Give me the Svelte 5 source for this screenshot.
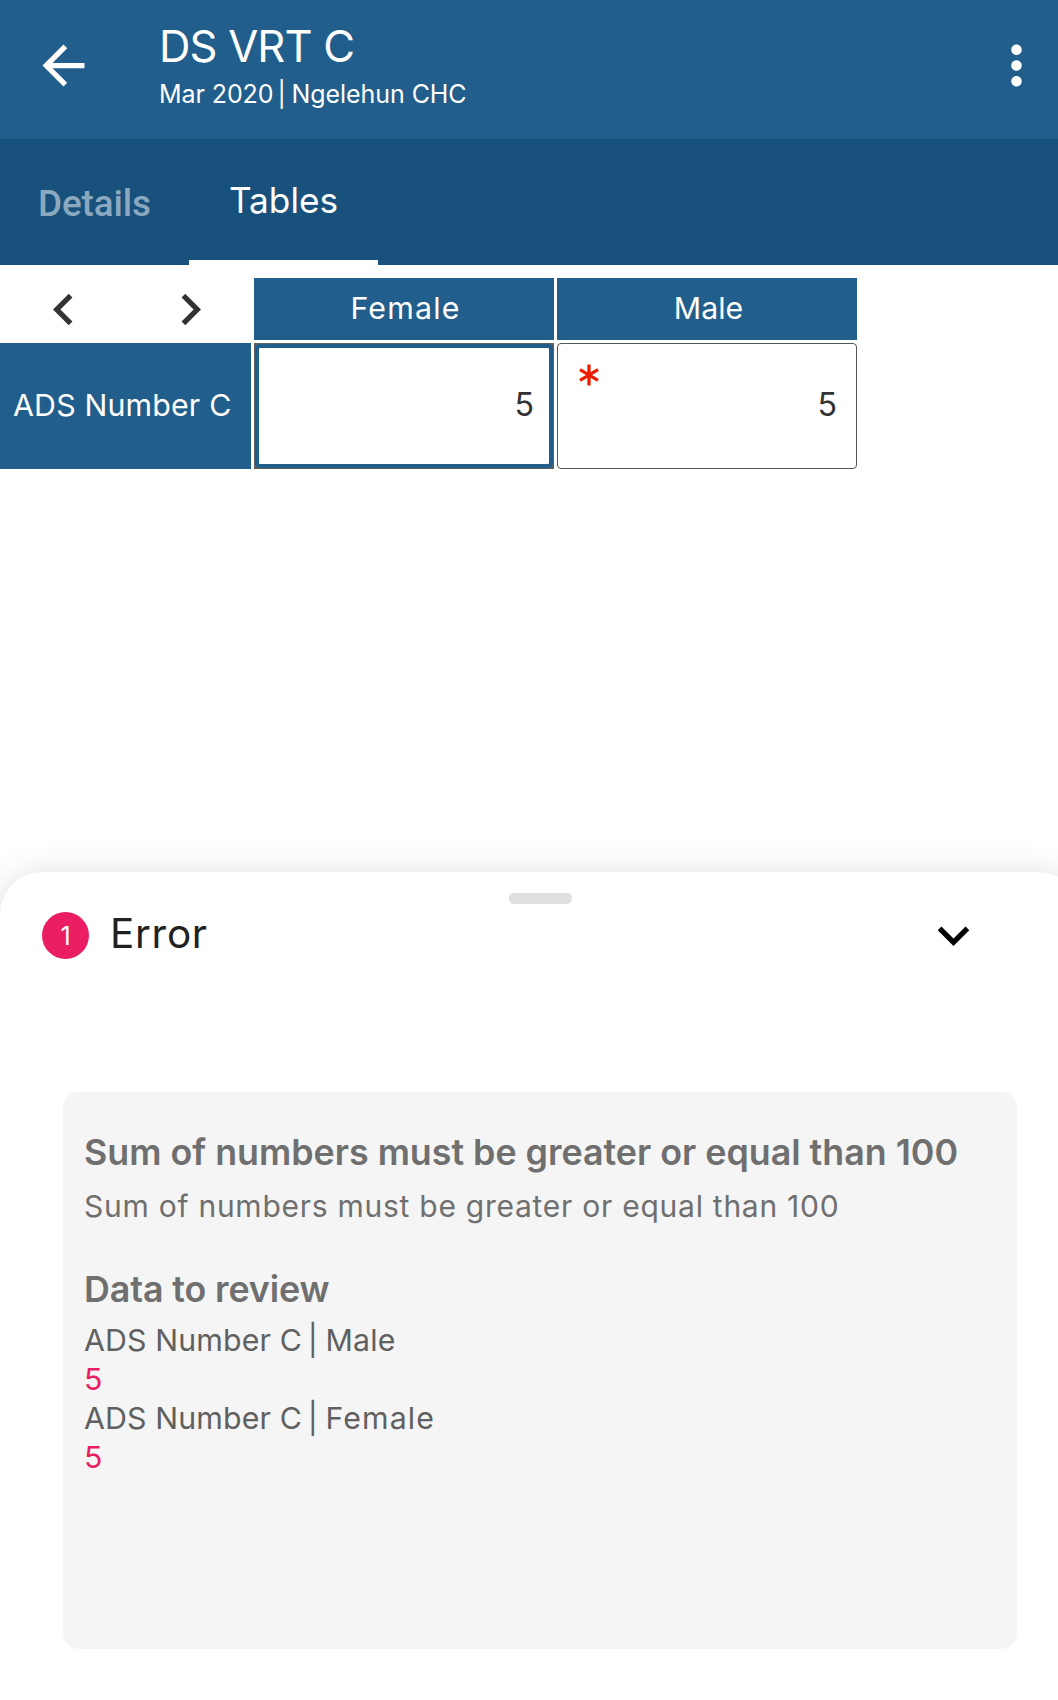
<script>
  const columns = ['Female', 'Male'];
  const rows = [
    { label: 'ADS Number C', cells: [{ value: 5, focused: true }, { value: 5, mandatory: true }] }
  ];
  const review = [
    { element: 'ADS Number C', option: 'Male', value: 5 },
    { element: 'ADS Number C', option: 'Female', value: 5, long: true }
  ];
</script>

<div class="screen">
  <header class="appbar">
    <svg class="icon back" viewBox="0 0 24 24"><path d="M20 11H7.83l5.59-5.59L12 4l-8 8 8 8 1.41-1.41L7.83 13H20v-2z" /></svg>
    <div class="titles">
      <h1>DS VRT C</h1>
      <p>Mar 2020 <span class="bar">|</span> Ngelehun CHC</p>
    </div>
    <svg class="icon" viewBox="0 0 24 24"><path d="M12 8c1.1 0 2-.9 2-2s-.9-2-2-2-2 .9-2 2 .9 2 2 2zm0 2c-1.1 0-2 .9-2 2s.9 2 2 2 2-.9 2-2-.9-2-2-2zm0 6c-1.1 0-2 .9-2 2s.9 2 2 2 2-.9 2-2-.9-2-2-2z" /></svg>
  </header>

  <nav class="tabs">
    <div class="tab details">Details</div>
    <div class="tab active">Tables</div>
  </nav>

  <main>
    <div class="grid">
      <div class="pager">
        <svg class="icon" viewBox="0 0 24 24"><path d="M15.41 16.59L10.83 12l4.58-4.59L14 6l-6 6 6 6z" /></svg>
        <svg class="icon" viewBox="0 0 24 24"><path d="M8.59 16.59L13.17 12 8.59 7.41 10 6l6 6-6 6z" /></svg>
      </div>
      {#each columns as column}
        <div class="colhead" class:wide={column === 'Female'}>{column}</div>
      {/each}
      {#each rows as row}
        <div class="rowhead">{row.label}</div>
        {#each row.cells as cell}
          <div class="cell" class:focused={cell.focused}>
            <div class="field">
              {#if cell.mandatory}
                <svg class="required" viewBox="0 0 20 22"><path d="M10 .5v21M1 5.7l18 10.6M19 5.7L1 16.3" /></svg>
              {/if}
              <span>{cell.value}</span>
            </div>
          </div>
        {/each}
      {/each}
    </div>
  </main>

  <section class="sheet">
    <div class="handle"></div>
    <div class="sheethead">
      <span class="badge">1</span>
      <h2>Error</h2>
      <svg class="icon" viewBox="0 0 24 24"><path d="M7.41 8.59L12 13.17l4.59-4.58L18 10l-6 6-6-6z" /></svg>
    </div>
    <div class="card">
      <h3 class="rule">Sum of numbers must be greater or equal than 100</h3>
      <p class="description">Sum of numbers must be greater or equal than 100</p>
      <h3 class="reviewtitle">Data to review</h3>
      <div class="review">
        {#each review as item}
          <p>{item.element} <span class="bar">|</span> <span class:long={item.long}>{item.option}</span></p>
          <p class="value">{item.value}</p>
        {/each}
      </div>
    </div>
  </section>
</div>

<style>
  :global(body) {
    margin: 0;
    background: #fff;
    overflow: hidden;
  }

  .screen {
    width: 1080px;
    height: 1700px;
    overflow: hidden;
    display: flex;
    flex-direction: column;
    background: #fff;
    font-family: Inter, Roboto, sans-serif;
  }

  h1, h2, h3, p {
    margin: 0;
    font-weight: 400;
    white-space: nowrap;
  }

  .icon {
    width: 63px;
    height: 63px;
    flex: none;
    fill: currentColor;
  }

  .appbar {
    box-sizing: border-box;
    height: 139px;
    flex: none;
    display: flex;
    align-items: flex-start;
    padding: 34px 32px 0;
    background: #215e8b;
    color: #fff;
  }

  .titles {
    flex: 1;
    margin: -16px 0 0 64px;
  }

  h1 {
    font-size: 43.5px;
    line-height: 56px;
    letter-spacing: -0.8px;
  }

  .titles p {
    font-size: 25px;
    line-height: 40px;
    letter-spacing: -0.08px;
  }

  .bar {
    margin: 0 -1px 0 -3px;
  }

  .tabs {
    height: 126px;
    flex: none;
    display: flex;
    background: #17517c;
  }

  .tab {
    box-sizing: border-box;
    width: 189px;
    display: flex;
    align-items: center;
    justify-content: center;
  }

  .details {
    padding-top: 3px;
    font: 500 36.8px Roboto, sans-serif;
    letter-spacing: -0.1px;
    color: #8ba8be;
  }

  .active {
    border-bottom: 5px solid #fff;
    font-size: 35.2px;
    color: #fff;
  }

  main {
    height: 594px;
    flex: none;
    padding-top: 13px;
  }

  .grid {
    display: grid;
    grid-template-columns: 251px 300px 300px;
    grid-template-rows: 62px 126px;
    gap: 3px;
    font-size: 30.3px;
    color: #fff;
  }

  .pager {
    display: flex;
    align-items: center;
    justify-content: space-between;
    padding: 0 29.5px 0 31.5px;
    color: #333;
  }

  .colhead, .rowhead {
    display: flex;
    align-items: center;
    padding-bottom: 2px;
    background: #215e8b;
  }

  .colhead {
    justify-content: center;
    padding-left: 3px;
  }

  .wide {
    letter-spacing: 1.2px;
  }

  .rowhead {
    padding-left: 13px;
    letter-spacing: 0.18px;
    white-space: nowrap;
  }

  .field {
    box-sizing: border-box;
    height: 126px;
    position: relative;
    display: flex;
    align-items: center;
    justify-content: flex-end;
    padding: 0 19px 3px 0;
    border: 1px solid #555;
    border-radius: 4px;
    background: #fff;
    color: #333;
    font-size: 32.2px;
  }

  .focused {
    background: #5f5f5f;
  }

  .focused .field {
    height: 124px;
    margin: 1px;
    padding-right: 15px;
    border: 4px solid #215e8b;
    border-radius: 5px;
  }

  .required {
    position: absolute;
    left: 20.5px;
    top: 19.5px;
    width: 20px;
    height: 22px;
    fill: none;
    stroke: #ec1c00;
    stroke-width: 3.3;
  }

  .sheet {
    flex: 1;
    border-radius: 42px 42px 0 0;
    background: #fff;
    box-shadow: 0 5px 36px rgba(0, 0, 0, 0.16);
  }

  .handle {
    width: 63px;
    height: 11px;
    margin: 21px auto 8px;
    border-radius: 5px;
    background: #dfdfdf;
  }

  .sheethead {
    height: 47px;
    display: flex;
    align-items: center;
    padding: 0 95px 0 42px;
  }

  .badge {
    width: 47px;
    height: 47px;
    display: flex;
    align-items: center;
    justify-content: center;
    border-radius: 50%;
    background: #eb1e63;
    color: #fff;
    font-size: 25px;
  }

  h2 {
    flex: 1;
    margin-left: 21px;
    padding-bottom: 4px;
    font-size: 40.4px;
    letter-spacing: 0.75px;
    color: #212121;
  }

  .card {
    box-sizing: border-box;
    width: 954px;
    height: 557px;
    margin: 133px 0 0 63px;
    padding: 34.5px 21px 0;
    border-radius: 16px;
    background: #f5f5f5;
    color: #6f6f6f;
    font-size: 30.3px;
  }

  h3 {
    font-size: 35.8px;
    font-weight: 600;
  }

  .rule {
    line-height: 50px;
  }

  .description {
    margin-top: 9px;
    font-size: 30px;
    line-height: 40px;
    letter-spacing: 0.74px;
  }

  .reviewtitle {
    margin-top: 43px;
    line-height: 40px;
    letter-spacing: -0.1px;
  }

  .review {
    margin-top: 12px;
    line-height: 39px;
    letter-spacing: 0.14px;
    color: #606060;
  }

  .long {
    letter-spacing: 1.1px;
  }

  .value {
    color: #eb1e63;
  }
</style>
